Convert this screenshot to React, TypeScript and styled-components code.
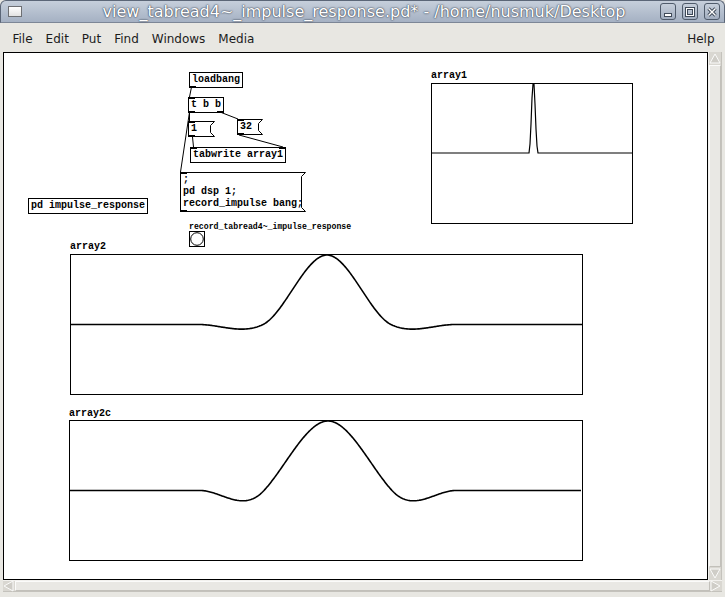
import React from "react";
import styled, { createGlobalStyle } from "styled-components";

const Global = createGlobalStyle`
  html, body { margin: 0; padding: 0; background: #e8e7e2; }
  body { width: 725px; height: 597px; overflow: hidden; }
`;

const Window = styled.div`
  width: 725px;
  height: 597px;
  display: flex;
  flex-direction: column;
  background: #e8e7e2;
  font-family: "DejaVu Sans", sans-serif;
`;

const TitleBar = styled.div`
  height: 23px;
  flex: none;
  box-sizing: border-box;
  display: grid;
  grid-template-columns: 1fr auto 1fr;
  align-items: center;
  padding: 0 4px 0 7px;
  background: linear-gradient(#c6cfdb, #a5b1c3);
  border: 1px solid #5b6677;
  border-bottom-color: #7c8696;
  border-radius: 6px 6px 0 0;
`;

const WinIcon = styled.span`
  width: 14px;
  height: 11px;
  box-sizing: border-box;
  border: 1px solid #6d6f73;
  background: linear-gradient(#ffffff, #e2e2e2);
  justify-self: start;
`;

const TitleText = styled.span`
  color: #ffffff;
  font-size: 16px;
  line-height: 20px;
  white-space: nowrap;
  text-shadow: 0 0 2px rgba(45, 55, 72, 0.95), 0 0 1px rgba(45, 55, 72, 0.95);
`;

const WinButtons = styled.div`
  justify-self: end;
  display: flex;
  gap: 6px;
`;

const WinButton = styled.span`
  width: 16px;
  height: 17px;
  box-sizing: border-box;
  border: 1px solid #4f5b6b;
  border-radius: 3px;
  background: linear-gradient(#c6cfdb, #a2aec0);
  display: flex;
  align-items: center;
  justify-content: center;
`;

const MenuBar = styled.div`
  height: 29px;
  flex: none;
  box-sizing: border-box;
  display: flex;
  align-items: center;
  padding: 2px 4px 0 6px;
  font-size: 12px;
  color: #1c1c1c;
`;

const MenuItem = styled.span<{ $push?: boolean }>`
  padding: 0 6.5px;
  margin-left: ${(p) => (p.$push ? "auto" : "0")};
`;

const Body = styled.div`
  flex: 1;
  min-height: 0;
  display: grid;
  grid-template-columns: 705px 14px;
  grid-template-rows: 528px 12px;
  padding: 0 3px 5px 3px;
`;

const Canvas = styled.div`
  position: relative;
  box-sizing: border-box;
  border: 1px solid #000;
  background: #fff;
  overflow: hidden;
  font-family: "Liberation Mono", "DejaVu Sans Mono", monospace;
  font-weight: bold;
  font-size: 10px;
  color: #000;
`;

const VScroll = styled.div`
  display: flex;
  flex-direction: column;
  box-sizing: border-box;
  background: #d9d7d1;
  border-left: 1px solid #f2f1ee;
  border-right: 1px solid #c4c2bc;
`;

const HScroll = styled.div`
  grid-column: 1 / span 2;
  display: flex;
  box-sizing: border-box;
  background: #d9d7d1;
  border-top: 1px solid #f2f1ee;
  border-bottom: 1px solid #c4c2bc;
`;

const ArrowCell = styled.span<{ $dir: "v" | "h" }>`
  flex: none;
  ${(p) => (p.$dir === "v" ? "height: 13px;" : "width: 12px;")}
  display: flex;
  align-items: center;
  justify-content: center;
`;

const Thumb = styled.span`
  flex: 1;
  box-sizing: border-box;
  background: #e9e8e4;
  border: 1px solid #c2c0ba;
  border-top-color: #fbfbfa;
  border-left-color: #fbfbfa;
`;

const ObjBox = styled.div<{ $x: number; $y: number }>`
  position: absolute;
  left: ${(p) => p.$x}px;
  top: ${(p) => p.$y}px;
  box-sizing: border-box;
  border: 1px solid #000;
  padding: 1px 2px;
  line-height: 12px;
  white-space: pre;
  background: #fff;
`;

const FlagBox = styled.div<{ $x: number; $y: number; $w: number; $h: number }>`
  position: absolute;
  left: ${(p) => p.$x}px;
  top: ${(p) => p.$y}px;
  width: ${(p) => p.$w}px;
  height: ${(p) => p.$h}px;
  box-sizing: border-box;
  padding: 2px 3px;
  line-height: 12px;
  white-space: pre;
`;

const Outline = styled.svg`
  position: absolute;
  left: 0;
  top: 0;
  overflow: visible;
`;

const FlagText = styled.span`
  position: relative;
`;

const Port = styled.span<{ $edge: "top" | "bottom"; $side: "left" | "right"; $o: number }>`
  position: absolute;
  width: 7px;
  height: 2px;
  background: #000;
  ${(p) => p.$edge}: ${(p) => p.$o}px;
  ${(p) => p.$side}: ${(p) => p.$o}px;
`;

const Label = styled.div<{ $x: number; $y: number; $small?: boolean }>`
  position: absolute;
  left: ${(p) => p.$x}px;
  top: ${(p) => p.$y}px;
  font-size: ${(p) => (p.$small ? "8.2px" : "10px")};
  line-height: 10px;
  white-space: pre;
`;

const Bang = styled.div<{ $x: number; $y: number }>`
  position: absolute;
  left: ${(p) => p.$x}px;
  top: ${(p) => p.$y}px;
  width: 16px;
  height: 16px;
  box-sizing: border-box;
  border: 1px solid #000;
  display: flex;
  align-items: center;
  justify-content: center;
`;

const Graph = styled.div<{ $x: number; $y: number; $w: number; $h: number }>`
  position: absolute;
  left: ${(p) => p.$x}px;
  top: ${(p) => p.$y}px;
  width: ${(p) => p.$w}px;
  height: ${(p) => p.$h}px;
  border: 1px solid #000;
`;

const Plot = styled.svg`
  display: block;
  overflow: visible;
`;

const Cords = styled.svg`
  position: absolute;
  left: 0;
  top: 0;
  width: 703px;
  height: 526px;
  pointer-events: none;
`;

/* Keys cubic convolution kernel with parameter alpha, unit spacing u */
function keys(d: number, u: number, alpha: number) {
  const s = Math.abs(d) / u;
  if (s < 1) return (alpha + 2) * s * s * s - (alpha + 3) * s * s + 1;
  if (s < 2) return alpha * s * s * s - 5 * alpha * s * s + 8 * alpha * s - 4 * alpha;
  return 0;
}

function curve(w: number, mid: number, amp: number, f: (x: number) => number) {
  const pts: string[] = [];
  for (let x = 0; x <= w; x += 1) {
    pts.push(`${x},${(mid - amp * f(x)).toFixed(2)}`);
  }
  return pts.join(" ");
}

const flagPoints = (w: number, h: number) =>
  `0.5,0.5 ${w - 0.5},0.5 ${w - 4.5},4.5 ${w - 4.5},${h - 4.5} ${w - 0.5},${h - 0.5} 0.5,${h - 0.5}`;

const Flagged: React.FC<{
  x: number; y: number; w: number; h: number; text: string; outlet?: boolean;
}> = ({ x, y, w, h, text, outlet = true }) => (
  <FlagBox $x={x} $y={y} $w={w} $h={h}>
    <Outline width={w} height={h}>
      <polygon points={flagPoints(w, h)} fill="#fff" stroke="#000" strokeWidth={1} />
    </Outline>
    <FlagText>{text}</FlagText>
    <Port $edge="top" $side="left" $o={0} />
    {outlet && <Port $edge="bottom" $side="left" $o={0} />}
  </FlagBox>
);

const menu = ["File", "Edit", "Put", "Find", "Windows", "Media"];

const Triangle: React.FC<{ dir: "up" | "down" | "left" | "right" }> = ({ dir }) => {
  const pts = {
    up: "1,10 6,1 11,10",
    down: "1,1 6,10 11,1",
    left: "10,1 1,6 10,11",
    right: "1,1 10,6 1,11",
  }[dir];
  return (
    <svg width={12} height={12}>
      <polygon points={pts} fill="#cfcdc7" stroke="#fbfbfa" strokeWidth={1} />
    </svg>
  );
};

export default function App() {
  const a2 = curve(511, 69.5, 69.5, (x) => keys(x - 256, 64, -0.45));
  const a2c = curve(511, 69.5, 69.5, (x) => keys(x - 258, 64, -1));
  const a1 =
    "0,69 97,69 98,60 99,40 100,14 101,0 102,0 103,20 104,45 105,62 106,69 200,69";

  return (
    <Window>
      <Global />
      <TitleBar>
        <WinIcon />
        <TitleText>view_tabread4~_impulse_response.pd* - /home/nusmuk/Desktop</TitleText>
        <WinButtons>
          <WinButton>
            <svg width={12} height={12}>
              <rect x={2.5} y={7.5} width={7} height={3} fill="#fff" stroke="#3f4a59" />
            </svg>
          </WinButton>
          <WinButton>
            <svg width={12} height={12}>
              <rect x={2.5} y={2.5} width={7} height={7} fill="none" stroke="#3f4a59" strokeWidth={3} />
              <rect x={2.5} y={2.5} width={7} height={7} fill="none" stroke="#fff" strokeWidth={1} />
            </svg>
          </WinButton>
          <WinButton>
            <svg width={12} height={12}>
              <path d="M2.5 2.5 L9.5 9.5 M9.5 2.5 L2.5 9.5" stroke="#3f4a59" strokeWidth={3.2} />
              <path d="M2.5 2.5 L9.5 9.5 M9.5 2.5 L2.5 9.5" stroke="#fff" strokeWidth={1.4} />
            </svg>
          </WinButton>
        </WinButtons>
      </TitleBar>

      <MenuBar>
        {menu.map((m) => (
          <MenuItem key={m}>{m}</MenuItem>
        ))}
        <MenuItem $push>Help</MenuItem>
      </MenuBar>

      <Body>
        <Canvas>
          <Cords>
            <g stroke="#000" strokeWidth={1} fill="none">
              <line x1={187.5} y1={34} x2={185.5} y2={44} />
              <line x1={185.5} y1={59} x2={185.5} y2={68} />
              <line x1={185.5} y1={59} x2={176.5} y2={119} />
              <line x1={216} y1={59} x2={234} y2={66} />
              <line x1={188.5} y1={84} x2={189.5} y2={94} />
              <line x1={235} y1={82} x2={279} y2={94} />
            </g>
          </Cords>

          <ObjBox $x={185} $y={19}>
            loadbang
            <Port $edge="bottom" $side="left" $o={-1} />
          </ObjBox>
          <ObjBox $x={184} $y={44}>
            t b b
            <Port $edge="top" $side="left" $o={-1} />
            <Port $edge="bottom" $side="left" $o={-1} />
            <Port $edge="bottom" $side="right" $o={-1} />
          </ObjBox>
          <Flagged x={184} y={68} w={27} h={16} text="1" />
          <Flagged x={233} y={66} w={26} h={16} text="32" />
          <ObjBox $x={186} $y={94}>
            tabwrite array1
            <Port $edge="top" $side="left" $o={-1} />
            <Port $edge="top" $side="right" $o={-1} />
          </ObjBox>
          <Flagged x={176} y={119} w={126} h={40} text={";\npd dsp 1;\nrecord_impulse bang;"} />
          <ObjBox $x={24} $y={145}>pd impulse_response</ObjBox>

          <Label $x={185} $y={169} $small>record_tabread4~_impulse_response</Label>
          <Bang $x={185} $y={178}>
            <svg width={14} height={14}>
              <circle cx={7} cy={7} r={6.3} fill="none" stroke="#000" strokeWidth={1} />
            </svg>
          </Bang>

          <Label $x={427} $y={18}>array1</Label>
          <Graph $x={427} $y={30} $w={200} $h={139}>
            <Plot width={200} height={139}>
              <polyline points={a1} fill="none" stroke="#000" strokeWidth={1.2} />
            </Plot>
          </Graph>

          <Label $x={66} $y={189}>array2</Label>
          <Graph $x={66} $y={201} $w={511} $h={139}>
            <Plot width={511} height={139}>
              <polyline points={a2} fill="none" stroke="#000" strokeWidth={1.6} />
            </Plot>
          </Graph>

          <Label $x={65} $y={356}>array2c</Label>
          <Graph $x={65} $y={367} $w={512} $h={139}>
            <Plot width={512} height={139}>
              <polyline points={a2c} fill="none" stroke="#000" strokeWidth={1.6} />
            </Plot>
          </Graph>
        </Canvas>

        <VScroll>
          <ArrowCell $dir="v"><Triangle dir="up" /></ArrowCell>
          <Thumb />
          <ArrowCell $dir="v"><Triangle dir="down" /></ArrowCell>
        </VScroll>

        <HScroll>
          <ArrowCell $dir="h"><Triangle dir="left" /></ArrowCell>
          <Thumb />
          <ArrowCell $dir="h"><Triangle dir="right" /></ArrowCell>
        </HScroll>
      </Body>
    </Window>
  );
}
